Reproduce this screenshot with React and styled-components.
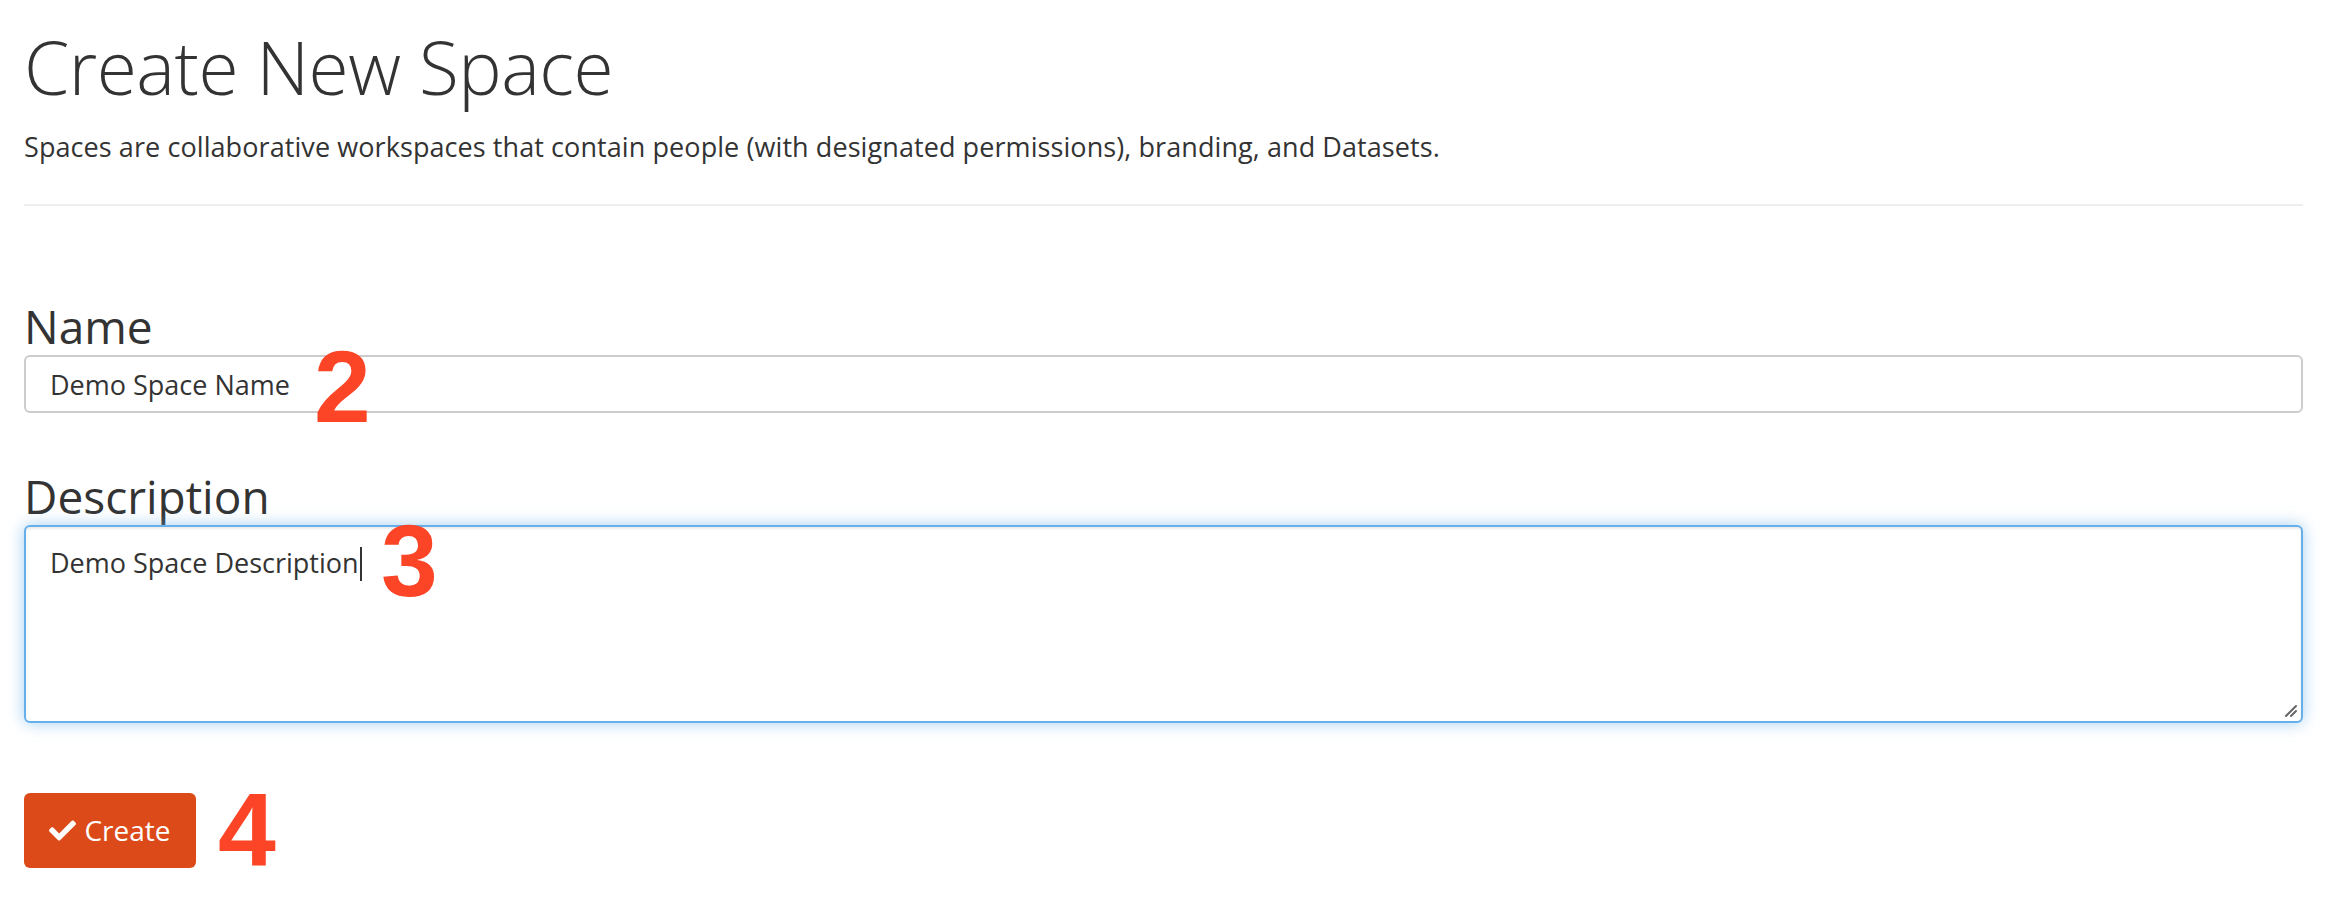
import React from 'react'
import styled, { createGlobalStyle } from 'styled-components'
import { FaCheck } from 'react-icons/fa'

const GlobalStyle = createGlobalStyle`
  html, body {
    margin: 0;
    padding: 0;
    background: #fff;
  }
  body {
    font-family: "Open Sans", "Noto Sans", sans-serif;
    color: #333;
  }
`

const Page = styled.div`
  padding: 30px 27px 0 24px;
`

const Title = styled.h1`
  margin: 0;
  font-size: 73px;
  font-weight: 300;
  line-height: 1;
  color: #333;
  letter-spacing: -0.5px;
`

const Lead = styled.p`
  margin: 30px 0 0;
  font-size: 27px;
  line-height: 1;
  letter-spacing: 0.08px;
  color: #333;
`

const Divider = styled.hr`
  margin: 44px 0 0;
  border: 0;
  border-top: 2px solid #eee;
`

const Form = styled.form`
  display: flex;
  flex-direction: column;
`

const Label = styled.label`
  display: block;
  margin-top: ${p => p.$top}px;
  margin-bottom: 6px;
  font-size: 46px;
  line-height: 1;
  color: #333;
`

const Field = styled.div`
  position: relative;
`

const TextInput = styled.input`
  box-sizing: border-box;
  display: block;
  width: 100%;
  height: 58px;
  padding: 0 24px;
  border: 2px solid #ccc;
  border-radius: 6px;
  font-family: inherit;
  font-size: 27px;
  color: #333;
  background: #fff;
  outline: none;
`

const TextArea = styled.div`
  box-sizing: border-box;
  position: relative;
  height: 198px;
  padding: 17px 24px;
  border: 2px solid #66afe9;
  border-radius: 6px;
  box-shadow: inset 0 2px 2px rgba(0, 0, 0, 0.075), 0 0 16px rgba(102, 175, 233, 0.6);
  font-size: 27px;
  line-height: 1.4;
  color: #333;
  background: #fff;
`

const Caret = styled.span`
  display: inline-block;
  width: 2px;
  height: 34px;
  margin-left: 1px;
  vertical-align: -8px;
  background: #333;
`

const Grip = styled.svg`
  position: absolute;
  right: 3px;
  bottom: 3px;
`

const Marker = styled.span`
  position: absolute;
  left: ${p => p.$left}px;
  top: ${p => p.$top}px;
  font-family: "Liberation Sans", Arial, sans-serif;
  font-weight: 700;
  font-size: 102px;
  line-height: 1;
  color: #fc4526;
  pointer-events: none;
`

const ButtonRow = styled.div`
  display: flex;
  align-items: center;
  gap: 22px;
  margin-top: 55px;
`

const Button = styled.button`
  display: inline-flex;
  align-items: center;
  justify-content: center;
  gap: 8px;
  width: 172px;
  height: 75px;
  padding: 0;
  border: 0;
  border-radius: 6px;
  background: #dd4a19;
  color: #fff;
  font-family: "Open Sans", "Noto Sans", sans-serif;
  font-size: 28px;
`

const StepNumber = styled.span`
  font-family: "Liberation Sans", Arial, sans-serif;
  font-weight: 700;
  font-size: 104px;
  line-height: 1;
  color: #fc4526;
`

export default function App() {
  return (
    <>
      <GlobalStyle />
      <Page>
        <Title>Create New Space</Title>
        <Lead>
          Spaces are collaborative workspaces that contain people (with designated permissions), branding, and Datasets.
        </Lead>
        <Divider />

        <Form onSubmit={e => e.preventDefault()}>
          <Label $top={97} htmlFor="space-name">Name</Label>
          <Field>
            <TextInput id="space-name" readOnly value="Demo Space Name" />
            <Marker $left={290} $top={-19}>2</Marker>
          </Field>

          <Label $top={60}>Description</Label>
          <Field>
            <TextArea>
              Demo Space Description<Caret />
              <Grip width="16" height="16" viewBox="0 0 16 16">
                <path d="M14 4 L4 14 M14 9 L9 14" stroke="#666" strokeWidth="2" strokeLinecap="round" />
              </Grip>
            </TextArea>
            <Marker $left={357} $top={-15}>3</Marker>
          </Field>

          <ButtonRow>
            <Button type="submit">
              <FaCheck size={27} />
              Create
            </Button>
            <StepNumber>4</StepNumber>
          </ButtonRow>
        </Form>
      </Page>
    </>
  )
}
